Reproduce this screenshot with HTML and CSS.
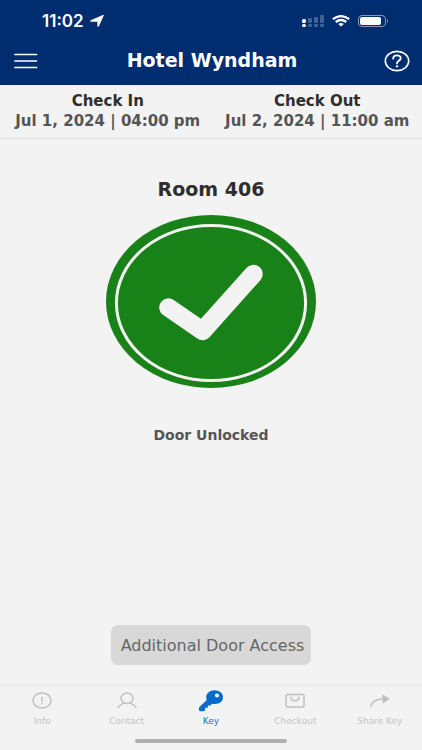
FILE: index.html
```
<!DOCTYPE html>
<html lang="en">

<head>
    <meta charset="UTF-8">
    <meta name="viewport" content="width=device-width, initial-scale=1">
    <title>Hotel Wyndham</title>
    <link rel="stylesheet" href="styles.css">
</head>

<body>
    <header class="header">
        <div class="status">
            <div class="clock">
                <span>11:02</span>
                <svg width="14" height="12" viewBox="0 0 14 12" fill="#fff">
                    <path d="M13.8.5 8.9 11.2Q8 12.4 7.4 11.2V6.8H1Q-.4 6.2.7 5.3L12.8 0Q14-.2 13.8.5Z" />
                </svg>
            </div>
            <div class="signals">
                <svg width="22" height="13" viewBox="0 0 22 13" fill="#fff">
                    <rect y="4" width="4" height="4" rx="1.5" />
                    <rect y="9" width="4" height="3" rx="1.5" />
                    <g opacity=".25">
                        <rect x="6" y="3" width="4" height="5" rx="1" />
                        <rect x="12" y="2" width="4" height="6" rx="1" />
                        <rect x="18" y="0" width="4" height="8" rx="1" />
                        <rect x="6" y="9" width="4" height="3" rx="1" />
                        <rect x="12" y="9" width="4" height="3" rx="1" />
                        <rect x="18" y="9" width="4" height="3" rx="1" />
                    </g>
                </svg>
                <svg width="18" height="12" viewBox="0 0 18 12" fill="none" stroke="#fff" stroke-width="2.2">
                    <path d="M.8 4.2Q9-2 17.2 4.2M3.7 7Q9 3 14.3 7" />
                    <path d="M6.2 9Q9 7 11.8 9L9 11.5Z" fill="#fff" stroke="none" />
                </svg>
                <svg width="31" height="12" viewBox="0 0 31 12">
                    <rect x=".5" y=".5" width="27" height="11" rx="3.5" fill="none" stroke="#8794b8" />
                    <rect x="2" y="2" width="21" height="8" rx="2" fill="#fff" />
                    <path d="M29 4Q31 6 29 8Z" fill="#8794b8" />
                </svg>
            </div>
        </div>
        <div class="title-bar">
            <button class="icon-button" aria-label="Menu">
                <svg width="24" height="16" viewBox="0 0 24 16" stroke="#fff" stroke-width="1.7" stroke-linecap="round">
                    <path d="M1 1.5H22.5M1 8H22.5M1 14.5H22.5" />
                </svg>
            </button>
            <h1 class="title">Hotel Wyndham</h1>
            <button class="icon-button help" aria-label="Help">
                <svg width="26" height="22" viewBox="0 0 26 22" fill="none" stroke="#fff" stroke-width="1.6">
                    <ellipse cx="13" cy="11" rx="11.7" ry="9.6" />
                    <path d="M9.2 8.6C9.4 4.3 16.7 4.4 16.7 8.2 16.7 10.7 13 10.6 13 13.4" stroke-width="1.9" stroke-linecap="round" />
                    <ellipse cx="13" cy="16.3" rx="1.3" ry="1.1" fill="#fff" stroke="none" />
                </svg>
            </button>
        </div>
    </header>

    <section class="dates">
        <div class="date">
            <h2>Check In</h2>
            <p>Jul 1, 2024 | 04:00 pm</p>
        </div>
        <div class="date">
            <h2>Check Out</h2>
            <p>Jul 2, 2024 | 11:00 am</p>
        </div>
    </section>

    <main class="main">
        <h2 class="room">Room 406</h2>
        <svg class="badge" width="210" height="174" viewBox="0 0 210 174">
            <ellipse cx="105" cy="86.5" rx="105" ry="86.5" fill="#188218" />
            <ellipse cx="105" cy="88" rx="94.6" ry="77.5" fill="none" stroke="#f3f3f3" stroke-width="3" />
            <path d="M62.5 92.5 96.5 116 147.5 59" fill="none" stroke="#f3f3f3" stroke-width="18.5" stroke-linecap="round" stroke-linejoin="round" />
        </svg>
        <p class="state">Door Unlocked</p>
        <button class="access">Additional Door Access</button>
    </main>

    <nav class="tabs">
        <a class="tab" href="#info">
            <svg width="22" height="22" viewBox="0 0 22 22" fill="none" stroke="#c0c0c0" stroke-width="1.5">
                <ellipse cx="11" cy="10.5" rx="9" ry="7.5" />
                <path d="M11 6.5V11.8M11 13V14.5" />
            </svg>
            <span>Info</span>
        </a>
        <a class="tab" href="#contact">
            <svg width="22" height="22" viewBox="0 0 22 22" fill="none" stroke="#c0c0c0" stroke-width="1.5">
                <ellipse cx="11" cy="8.2" rx="6" ry="5.3" />
                <path d="M2 17.4C3.5 15 5.6 13.9 8.2 12.9M13.8 12.9C16.4 13.9 18.5 15 20 17.4" stroke-linecap="round" />
            </svg>
            <span>Contact</span>
        </a>
        <a class="tab active" href="#key" aria-current="page">
            <svg width="24" height="22" viewBox="0 0 24 22" fill="#066ccc">
                <path fill-rule="evenodd" d="M15.7.3C20.5.3 24 3.3 24 7.3S20.5 14 15.9 14Q14.5 14 13.2 13.7L11.4 15.4H8.8V17.8H6.2V20.1Q5.8 21.2 4.5 21.2H1.1Q0 21.2 0 20.1V17.4L7.8 10Q7.2 8.8 7.2 7.2C7.2 3.3 11 .3 15.7.3ZM18 3.6A2.1 1.9 0 1 0 18 7.4 2.1 1.9 0 1 0 18 3.6Z" />
            </svg>
            <span>Key</span>
        </a>
        <a class="tab" href="#checkout">
            <svg width="22" height="22" viewBox="0 0 22 22" fill="none" stroke="#c0c0c0" stroke-width="1.5">
                <rect x="2" y="4.4" width="18" height="12.5" rx="1" />
                <path d="M7 7.3C7.5 11.8 14.5 11.8 15 7.3" stroke-linecap="round" />
            </svg>
            <span>Checkout</span>
        </a>
        <a class="tab" href="#share">
            <svg width="22" height="22" viewBox="0 0 22 22" fill="none" stroke="#c0c0c0" stroke-width="1.5">
                <path d="M2 16.5C2.7 11.5 6.5 9 14.5 9" stroke-linecap="round" />
                <path d="M14 5 20 9 14 13Z" fill="#c0c0c0" stroke-width="1" stroke-linejoin="round" />
            </svg>
            <span>Share Key</span>
        </a>
    </nav>
    <div class="home-bar"></div>
</body>

</html>
```
FILE: styles.css
```
* {
    margin: 0;
    padding: 0;
    box-sizing: border-box;
}

body {
    display: flex;
    flex-direction: column;
    min-height: 100vh;
    background: #f3f3f3;
    color: #2e2e2e;
    font-family: "DejaVu Sans", sans-serif;
}

button {
    border: none;
    background: none;
    font: inherit;
    cursor: pointer;
}

svg {
    display: block;
}

.header {
    background: #002d70;
    color: #fff;
}

.status {
    display: flex;
    justify-content: space-between;
    align-items: center;
    padding: 10px 33px 0 42px;
    height: 32px;
}

.clock {
    display: flex;
    align-items: center;
    gap: 6px;
    font-family: Inter, sans-serif;
    font-size: 17px;
    font-weight: 600;
}

.signals {
    display: flex;
    align-items: center;
    gap: 8px;
}

.title-bar {
    display: grid;
    grid-template-columns: 40px 1fr 40px;
    align-items: center;
    height: 53px;
    padding: 5px 12px 0 14px;
}

.title {
    padding-bottom: 3px;
    font-size: 19px;
    line-height: 24px;
    text-align: center;
}

.help {
    justify-self: end;
}

.dates {
    display: grid;
    grid-template-columns: 1fr 1fr;
    padding: 6px 0 6px 3px;
    border-bottom: 1px solid #dcdcdc;
    text-align: center;
    white-space: nowrap;
}

.date h2 {
    font-size: 15px;
    line-height: 20px;
}

.date p {
    color: #555;
    font-size: 15px;
    font-weight: 700;
    line-height: 21px;
}

.main {
    display: flex;
    flex: 1;
    flex-direction: column;
    align-items: center;
    padding: 38px 16px 20px;
}

.room {
    font-size: 19px;
    line-height: 24px;
}

.badge {
    margin-top: 14px;
}

.state {
    margin-top: 36px;
    color: #555;
    font-size: 14px;
    font-weight: 700;
    line-height: 20px;
}

.access {
    height: 40px;
    margin-top: auto;
    padding: 0 7px 0 10px;
    border-radius: 7px;
    background: #d8d8d8;
    color: #666;
    font-size: 16px;
}

.tabs {
    display: grid;
    grid-template-columns: repeat(5, 1fr);
    padding-top: 4px;
    border-top: 1px solid #e6e6e6;
    box-shadow: 0 -1px 2px #eaeaea;
}

.tab {
    display: flex;
    flex-direction: column;
    align-items: center;
    gap: 2px;
    color: #c4c4c4;
    font-size: 9px;
    line-height: 14px;
    text-decoration: none;
}

.active {
    color: #2a70c0;
}

.home-bar {
    width: 36%;
    height: 4px;
    margin: 11px auto 7px;
    border-radius: 2px;
    background: #b0b0b0;
}
```
